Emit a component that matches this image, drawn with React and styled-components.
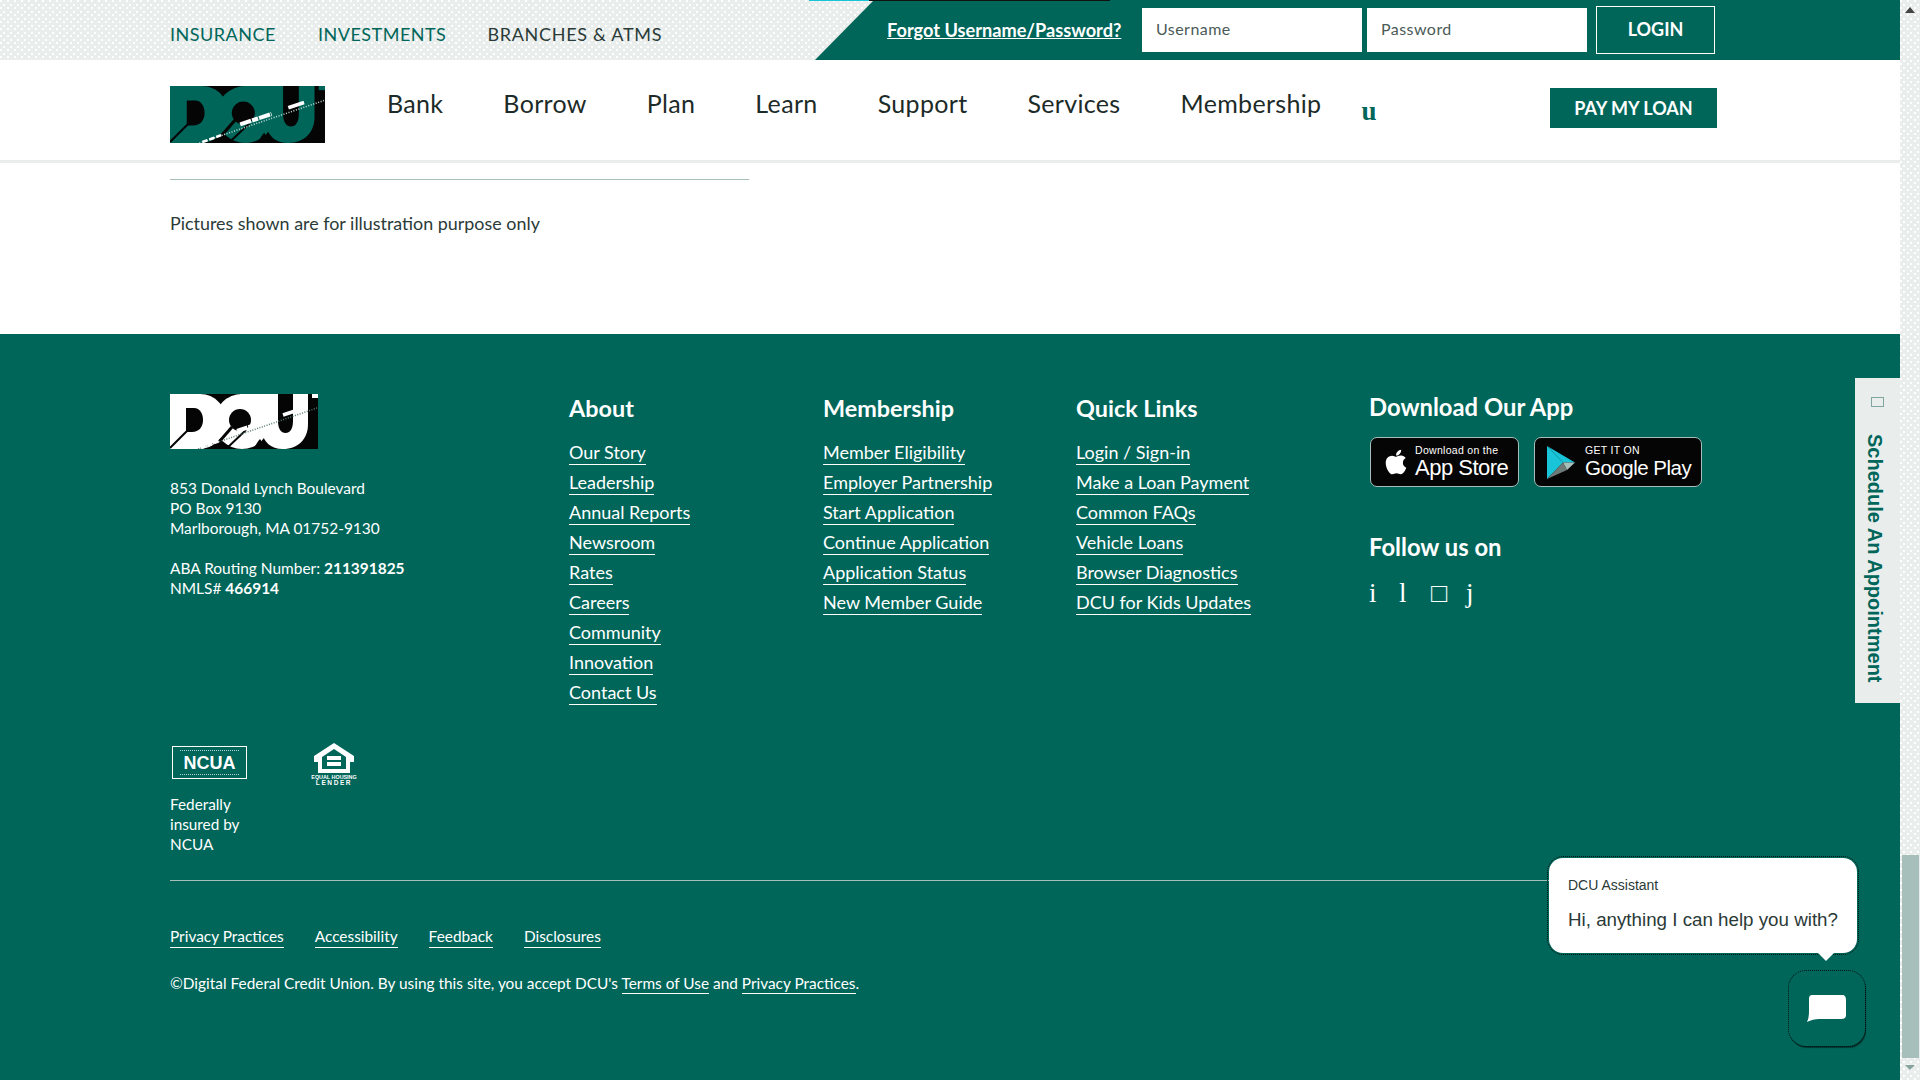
import React from "react";
import styled, { createGlobalStyle } from "styled-components";
import { FaApple } from "react-icons/fa";

const GREEN = "#00665A";
const PALE = "#E9EDEC";
const INK = "#1d2b28";
const FONT = `Lato, "Noto Sans", sans-serif`;
const dots = `
  background-color: ${PALE};
  background-image:
    radial-gradient(circle at 1px 1px, #fff 0.8px, transparent 1px),
    radial-gradient(circle at 1px 1px, #fff 0.8px, transparent 1px);
  background-size: 7px 7px;
  background-position: 0 0, 3px 4px;
`;

const Global = createGlobalStyle`
  html, body { margin: 0; padding: 0; overflow: hidden; background: #fff; }
  * { box-sizing: border-box; }
  a { color: inherit; text-decoration: none; }
`;

const Frame = styled.div`
  position: relative;
  display: flex;
  width: 1920px;
  height: 1080px;
  overflow: hidden;
  font-family: ${FONT};
  color: ${INK};
`;
const Page = styled.div`
  width: 1900px;
  display: flex;
  flex-direction: column;
`;

const TopBar = styled.header`
  position: relative;
  height: 60px;
  display: flex;
  ${dots}
`;
const TopStrip = styled.span`
  position: absolute;
  top: 0;
  height: 1px;
  left: ${(p) => p.$left}px;
  width: ${(p) => p.$width}px;
  background: ${(p) => p.$color};
  z-index: 1;
`;
const TopLinks = styled.nav`
  width: 815px;
  padding: 24px 0 0 170px;
  display: flex;
  gap: 42px;
  font-size: 18px;
  line-height: 20px;
  letter-spacing: 0.5px;
`;
const TopLink = styled.a`
  color: ${(p) => (p.$dark ? "#2a3b38" : GREEN)};
  letter-spacing: ${(p) => (p.$dark ? "0.7px" : "inherit")};
  margin-left: ${(p) => (p.$dark ? "-1px" : "0")};
`;
const LoginPanel = styled.div`
  flex: 1;
  background: ${GREEN};
  clip-path: polygon(59px 0, 100% 0, 100% 100%, 0 100%);
  display: flex;
  align-items: flex-start;
  padding-left: 72px;
`;
const Forgot = styled.a`
  width: 255px;
  margin-top: 19px;
  font-size: 18.2px;
  line-height: 22px;
  font-weight: 700;
  color: #fff;
  text-decoration: underline;
`;
const Field = styled.div`
  width: 220px;
  height: 44px;
  margin: 8px 5px 0 0;
  background: #fff;
  padding-left: 14px;
  font-size: 16px;
  line-height: 42px;
  letter-spacing: 0.45px;
  color: #4b5a57;
`;
const LoginButton = styled.button`
  width: 119px;
  height: 48px;
  margin: 6px 0 0 4px;
  padding: 0 0 2px;
  background: transparent;
  border: 1.5px solid #fff;
  color: #fff;
  font-family: ${FONT};
  font-weight: 700;
  font-size: 18px;
`;

const MainNav = styled.nav`
  height: 103px;
  padding: 0 183px 3px 170px;
  display: flex;
  align-items: flex-start;
  background: #fff;
  border-bottom: 3px solid ${PALE};
`;
const LogoSvg = styled.svg`
  display: block;
  flex: none;
`;
const NavLogo = styled.div`
  margin: 26px 62px 0 0;
`;
const NavList = styled.div`
  display: flex;
  gap: 60px;
  margin-top: 27px;
  font-size: 25px;
  line-height: 32px;
  letter-spacing: 0.33px;
`;
const NavIcon = styled.span`
  margin: 36px 0 0 40px;
  font-family: "Liberation Serif", serif;
  font-weight: 700;
  font-size: 27px;
  line-height: 30px;
  color: ${GREEN};
`;
const PayButton = styled.a`
  margin: 28px 0 0 auto;
  width: 167px;
  height: 40px;
  background: ${GREEN};
  color: #fff;
  font-weight: 700;
  font-size: 18px;
  line-height: 40px;
  text-align: center;
`;

const Content = styled.main`
  height: 171px;
  padding: 16px 0 0 170px;
`;
const Rule = styled.hr`
  width: 579px;
  height: 1px;
  margin: 0 0 32px;
  border: 0;
  background: #A6BFBA;
`;
const Note = styled.p`
  margin: 0;
  font-size: 17.9px;
  line-height: 22px;
  color: #2a3b38;
`;

const Footer = styled.footer`
  flex: 1;
  background: ${GREEN};
  color: #fff;
  padding: 60px 0 0 170px;
`;
const Columns = styled.div`
  display: grid;
  grid-template-columns: 399px 254px 253px 293px 1fr;
  height: 349px;
`;
const Address = styled.p`
  margin: 29px 0 0;
  font-size: 15.45px;
  line-height: 20px;
`;
const Heading = styled.h3`
  margin: 0 0 18px ${(p) => (p.$large ? "-1px" : "0")};
  font-size: ${(p) => (p.$large ? "23.8px" : "23.4px")};
  line-height: 28px;
  font-weight: 700;
`;
const LinkList = styled.ul`
  list-style: none;
  margin: 0;
  padding: 0;
  display: flex;
  flex-direction: column;
`;
const FootLink = styled.li`
  height: 29.95px;
  font-size: 18px;
  line-height: 24px;
`;
const Under = styled.a`
  display: inline-block;
  border-bottom: 1px solid #fff;
  height: 25px;
`;
const AppColumn = styled.div`
  margin: -1px 0 0 1px;
`;
const Badges = styled.div`
  display: flex;
  gap: 15px;
  margin: -2px 0 46px;
`;
const Badge = styled.div`
  height: 50px;
  width: ${(p) => p.$width}px;
  background: #050505;
  border: 1px solid #A6BFBA;
  border-radius: 7px;
  display: flex;
  align-items: center;
  gap: ${(p) => p.$gap}px;
  padding-left: ${(p) => p.$pad}px;
`;
const BadgeText = styled.div`
  display: flex;
  flex-direction: column;
  font-family: "Liberation Sans", sans-serif;
`;
const BadgeSmall = styled.span`
  font-size: 10.5px;
  line-height: 11px;
  letter-spacing: 0.3px;
`;
const BadgeBig = styled.span`
  font-size: ${(p) => p.$size}px;
  line-height: 23px;
  letter-spacing: -0.5px;
`;
const Socials = styled.div`
  display: flex;
  margin: -3px 0 0 -1px;
  font-family: "Liberation Serif", serif;
  font-size: 27px;
  line-height: 34px;
`;
const Social = styled.span`
  width: ${(p) => p.$width}px;
`;
const Certs = styled.div`
  display: flex;
  height: 137px;
`;
const CertBlock = styled.div`
  width: 144px;
`;
const Ncua = styled.div`
  position: relative;
  width: 75px;
  height: 33px;
  margin: 3px 0 0 2px;
  border: 1px solid #fff;
  font-family: "Liberation Sans", sans-serif;
  font-weight: 700;
  font-size: 18px;
  line-height: 32px;
  text-align: center;
  &::before, &::after {
    content: "";
    position: absolute;
    left: 7px;
    right: 7px;
    border-top: 1px dotted rgba(255, 255, 255, 0.7);
  }
  &::before { top: 3px; }
  &::after { bottom: 3px; }
`;
const CertText = styled.p`
  margin: 15px 0 0;
  width: 80px;
  font-size: 15.3px;
  line-height: 20px;
`;
const HousingWrap = styled.div`
  width: 40px;
  display: flex;
  flex-direction: column;
  align-items: center;
  font-family: "Liberation Sans", sans-serif;
  font-weight: 700;
`;
const HousingTop = styled.span`
  font-size: 5.4px;
  line-height: 5px;
  white-space: nowrap;
  margin-top: 2px;
`;
const HousingBottom = styled.span`
  font-size: 6.5px;
  line-height: 6px;
  letter-spacing: 1.6px;
`;
const FootRule = styled.hr`
  width: 1560px;
  height: 1px;
  margin: 0 0 45px;
  border: 0;
  background: #A6BFBA;
`;
const LegalRow = styled.div`
  display: flex;
  gap: 31px;
  font-size: 15.4px;
  line-height: 20px;
  margin-bottom: 24px;
`;
const LegalLink = styled.a`
  border-bottom: 1px solid #fff;
  padding-bottom: 1px;
`;
const Copyright = styled.p`
  margin: 0;
  font-size: 15.4px;
  line-height: 22px;
`;

const SideTab = styled.aside`
  position: absolute;
  left: 1855px;
  top: 378px;
  width: 45px;
  height: 325px;
  background: ${PALE};
  display: flex;
  flex-direction: column;
  align-items: center;
  padding-top: 19px;
`;
const TabBox = styled.span`
  width: 13px;
  height: 10px;
  border: 1px solid #7ea59e;
  margin-left: -1px;
`;
const TabLabel = styled.span`
  margin: 27px 6px 0 0;
  writing-mode: vertical-rl;
  font-family: "Liberation Sans", sans-serif;
  font-weight: 700;
  font-size: 20px;
  line-height: 22px;
  color: ${GREEN};
`;

const Bubble = styled.div`
  position: absolute;
  left: 1549px;
  top: 858px;
  width: 308px;
  height: 95px;
  background: #fff;
  border-radius: 14px;
  outline: 1px dotted rgba(0, 0, 0, 0.8);
  outline-offset: 1px;
  padding: 19px 0 0 19px;
  font-family: "Liberation Sans", sans-serif;
  color: #2a3a37;
  &::after {
    content: "";
    position: absolute;
    left: 268px;
    top: 94px;
    border-left: 9px solid transparent;
    border-right: 9px solid transparent;
    border-top: 9px solid #fff;
  }
`;
const BubbleName = styled.div`
  font-size: 14px;
  line-height: 16px;
`;
const BubbleText = styled.div`
  margin-top: 16px;
  font-size: 18.75px;
  line-height: 22px;
  white-space: nowrap;
`;
const ChatButton = styled.div`
  position: absolute;
  left: 1789px;
  top: 971px;
  width: 76px;
  height: 75px;
  border-radius: 17px;
  background: ${GREEN};
  outline: 1px dotted rgba(0, 0, 0, 0.8);
  box-shadow: 1px 2px 1px rgba(0, 0, 0, 0.45);
  display: flex;
  align-items: center;
  justify-content: center;
`;

const Scrollbar = styled.div`
  width: 20px;
  height: 1080px;
  display: flex;
  flex-direction: column;
  align-items: center;
  ${dots}
`;
const ArrowUp = styled.span`
  margin-top: 7px;
  border-left: 5px solid transparent;
  border-right: 5px solid transparent;
  border-bottom: 6px solid #444;
`;
const Thumb = styled.span`
  width: 17px;
  height: 203px;
  margin-top: 842px;
  background: #A6BFBA;
`;
const ArrowDown = styled.span`
  margin-top: 7px;
  border-left: 5px solid transparent;
  border-right: 5px solid transparent;
  border-top: 5px solid #86a39d;
`;

function Logo({ width, height, fill, speck }) {
  return (
    <LogoSvg width={width} height={height} viewBox="0 0 148 55" preserveAspectRatio="none" aria-label="DCU">
      <rect width="148" height="55" fill="#050505" />
      <g fill={fill}>
        <path d="M0 0H30C45 0 56 12 56 27C56 43 44 55 28 55H0Z" />
        <circle cx="72" cy="27.5" r="27.5" />
        <rect x="70" y="0" width="40" height="36" />
        <path d="M92 0H138V30C138 45 128 55 113 55C100 55 95 48 92 40Z" />
        <rect x="142" y="0" width="6" height="4" />
      </g>
      <g fill="#050505">
        <path d="M16 14H24C30 14 33 20 33 26C33 33 29 38 22 38H16Z" />
        <circle cx="70" cy="26" r="11" />
        <path d="M108 0H123V27C123 35 120 39 115.5 39C111 39 108 35 108 27Z" />
        <path d="M84 55C86 50 88 47 90 45C93 50 97 55 101 55Z" />
      </g>
      <g stroke="#050505" fill="none">
        <path d="M17 37L0 54" strokeWidth="2" />
        <path d="M62 33L43 55" strokeWidth="3" />
        <path d="M76 36L56 55" strokeWidth="2" />
      </g>
      <g fill="none">
        <path d="M28 55L147 14" stroke={speck} strokeWidth="1.5" strokeDasharray="1 1.5" />
        <path d="M31 54L50 47" stroke="#fff" strokeWidth="2.5" strokeDasharray="5 2" />
        <path d="M67 37L97 27" stroke="#fff" strokeWidth="4" strokeDasharray="11 1 6 1" />
        <path d="M113 21L128 16" stroke="#fff" strokeWidth="3.5" />
      </g>
    </LogoSvg>
  );
}

function PlayIcon() {
  return (
    <svg width="30" height="33" viewBox="0 0 30 33" aria-hidden="true">
      <path d="M1 0L17 16.5L1 33Z" fill="#19C4D8" />
      <path d="M1 0L29 16.5L17 16.5Z" fill="#19C4D8" />
      <path d="M29 16.5L17 16.5L21 24Z" fill="#A6BFBA" />
      <path d="M1 33L17 16.5L21 24Z" fill="#6c7a78" />
    </svg>
  );
}

function HousingIcon() {
  return (
    <svg width="40" height="30" viewBox="0 0 40 30" aria-hidden="true">
      <path d="M20 0L40 13V19H36V30H4V19H0V13Z" fill="#fff" />
      <path d="M8 14L20 6L32 14V26H8Z" fill={GREEN} />
      <rect x="13" y="13" width="14" height="4" fill="#fff" />
      <rect x="13" y="19" width="14" height="4" fill="#fff" />
    </svg>
  );
}

const about = ["Our Story", "Leadership", "Annual Reports", "Newsroom", "Rates", "Careers", "Community", "Innovation", "Contact Us"];
const membership = ["Member Eligibility", "Employer Partnership", "Start Application", "Continue Application", "Application Status", "New Member Guide"];
const quick = ["Login / Sign-in", "Make a Loan Payment", "Common FAQs", "Vehicle Loans", "Browser Diagnostics", "DCU for Kids Updates"];
const nav = ["Bank", "Borrow", "Plan", "Learn", "Support", "Services", "Membership"];

function LinkColumn({ title, links }) {
  return (
    <div>
      <Heading>{title}</Heading>
      <LinkList>
        {links.map((l) => (
          <FootLink key={l}><Under>{l}</Under></FootLink>
        ))}
      </LinkList>
    </div>
  );
}

export default function App() {
  return (
    <Frame>
      <Global />
      <Page>
        <TopBar>
          <TopStrip $left={809} $width={60} $color="#19C4D8" />
          <TopStrip $left={869} $width={241} $color="#111" />
          <TopLinks>
            <TopLink>INSURANCE</TopLink>
            <TopLink>INVESTMENTS</TopLink>
            <TopLink $dark>BRANCHES &amp; ATMS</TopLink>
          </TopLinks>
          <LoginPanel>
            <Forgot>Forgot Username/Password?</Forgot>
            <Field>Username</Field>
            <Field>Password</Field>
            <LoginButton>LOGIN</LoginButton>
          </LoginPanel>
        </TopBar>
        <MainNav>
          <NavLogo><Logo width={155} height={57} fill={GREEN} speck="#bcd8d2" /></NavLogo>
          <NavList>
            {nav.map((n) => <a key={n}>{n}</a>)}
          </NavList>
          <NavIcon>u</NavIcon>
          <PayButton>PAY MY LOAN</PayButton>
        </MainNav>
        <Content>
          <Rule />
          <Note>Pictures shown are for illustration purpose only</Note>
        </Content>
        <Footer>
          <Columns>
            <div>
              <Logo width={148} height={55} fill="#fff" speck="#5b7d76" />
              <Address>
                853 Donald Lynch Boulevard<br />
                PO Box 9130<br />
                Marlborough, MA 01752-9130<br />
                <br />
                ABA Routing Number: <b>211391825</b><br />
                NMLS# <b>466914</b>
              </Address>
            </div>
            <LinkColumn title="About" links={about} />
            <LinkColumn title="Membership" links={membership} />
            <LinkColumn title="Quick Links" links={quick} />
            <AppColumn>
              <Heading $large>Download Our App</Heading>
              <Badges>
                <Badge $width={149} $pad={11} $gap={5}>
                  <FaApple size={28} color="#fff" />
                  <BadgeText>
                    <BadgeSmall>Download on the</BadgeSmall>
                    <BadgeBig $size={22}>App Store</BadgeBig>
                  </BadgeText>
                </Badge>
                <Badge $width={168} $pad={11} $gap={9}>
                  <PlayIcon />
                  <BadgeText>
                    <BadgeSmall>GET IT ON</BadgeSmall>
                    <BadgeBig $size={20.5}>Google Play</BadgeBig>
                  </BadgeText>
                </Badge>
              </Badges>
              <Heading $large>Follow us on</Heading>
              <Socials>
                <Social $width={30}>i</Social>
                <Social $width={32}>l</Social>
                <Social $width={35}>□</Social>
                <Social $width={20}>j</Social>
              </Socials>
            </AppColumn>
          </Columns>
          <Certs>
            <CertBlock>
              <Ncua>NCUA</Ncua>
              <CertText>Federally insured by NCUA</CertText>
            </CertBlock>
            <HousingWrap>
              <HousingIcon />
              <HousingTop>EQUAL HOUSING</HousingTop>
              <HousingBottom>LENDER</HousingBottom>
            </HousingWrap>
          </Certs>
          <FootRule />
          <LegalRow>
            <LegalLink>Privacy Practices</LegalLink>
            <LegalLink>Accessibility</LegalLink>
            <LegalLink>Feedback</LegalLink>
            <LegalLink>Disclosures</LegalLink>
          </LegalRow>
          <Copyright>
            ©Digital Federal Credit Union. By using this site, you accept DCU's <LegalLink>Terms of Use</LegalLink> and <LegalLink>Privacy Practices</LegalLink>.
          </Copyright>
        </Footer>
      </Page>
      <Scrollbar>
        <ArrowUp />
        <Thumb />
        <ArrowDown />
      </Scrollbar>
      <SideTab>
        <TabBox />
        <TabLabel>Schedule An Appointment</TabLabel>
      </SideTab>
      <Bubble>
        <BubbleName>DCU Assistant</BubbleName>
        <BubbleText>Hi, anything I can help you with?</BubbleText>
      </Bubble>
      <ChatButton>
        <svg width="40" height="29" viewBox="0 0 40 29" aria-hidden="true">
          <path d="M5 1H35C38 1 39 3 39 6V21C39 24 37 25 35 25H12C8 25 4 26 0 28C2 24 2 20 2 16V5C2 2 3 1 5 1Z" fill="#fff" />
        </svg>
      </ChatButton>
    </Frame>
  );
}
